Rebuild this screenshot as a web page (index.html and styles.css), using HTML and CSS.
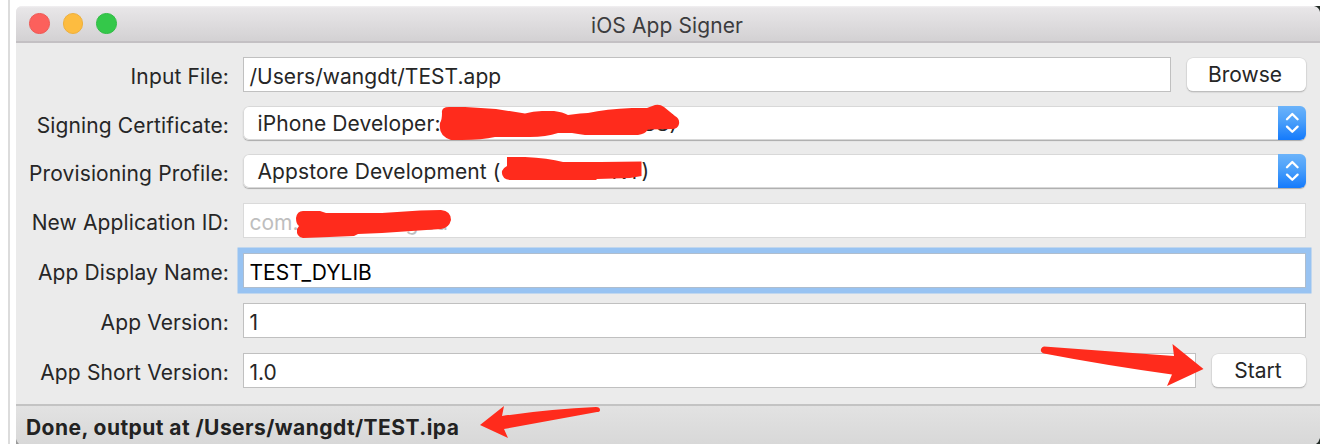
FILE: index.html
```html
<!DOCTYPE html>
<html lang="en">
<head>
<meta charset="utf-8">
<title>iOS App Signer</title>
<link rel="stylesheet" href="styles.css">
</head>
<body>
<div class="page">
  <div class="window">
    <header class="titlebar">
      <div class="lights"><i class="light close"></i><i class="light minimize"></i><i class="light expand"></i></div>
      <h1 class="title">iOS App Signer</h1>
    </header>
    <main class="form">
      <div class="row">
        <label class="label">Input File:</label>
        <div class="field path">/Users/wangdt/TEST.app</div>
        <button class="button browse">Browse</button>
      </div>
      <div class="row row-popup">
        <label class="label">Signing Certificate:</label>
        <div class="popup"><span class="value cert"><span>iPhone Developer:</span><span>SS)</span></span>
          <span class="stepper"><svg width="28" height="34" viewBox="0 0 28 34"><path d="M9 13.200 14.300 8 19.600 13.200M9 20.600 14.300 25.800 19.600 20.600"/></svg></span></div>
      </div>
      <div class="row row-popup">
        <label class="label">Provisioning Profile:</label>
        <div class="popup"><span class="value prof"><span>Appstore Development (</span><span>NY)</span></span>
          <span class="stepper"><svg width="28" height="34" viewBox="0 0 28 34"><path d="M9 13.200 14.300 8 19.600 13.200M9 20.600 14.300 25.800 19.600 20.600"/></svg></span></div>
      </div>
      <div class="row">
        <label class="label">New Application ID:</label>
        <div class="field placeholder"><span class="prefix">com.</span><span>g.su</span></div>
      </div>
      <div class="row">
        <label class="label">App Display Name:</label>
        <div class="field focused">TEST_DYLIB</div>
      </div>
      <div class="row">
        <label class="label">App Version:</label>
        <div class="field">1</div>
      </div>
      <div class="row">
        <label class="label">App Short Version:</label>
        <div class="field">1.0</div>
        <button class="button start">Start</button>
      </div>
    </main>
    <footer class="status">Done, output at /Users/wangdt/TEST.ipa</footer>
  </div>
  <svg class="marks" width="1324" height="444" viewBox="0 0 1324 444">
    <path fill="#9a9a9a" d="M16 439v5h3q-2-2-3-5z"/>
    <path fill="#222b26" d="M1314 6h6v6q-1-5-6-6zM1320 438v6h-4q3-2 4-6z"/>
    <g fill="#ff2b1c">
      <path d="M442 113Q441 107 449 107L465 107Q481 108 496 109L525 113.500Q533 111 542 111L554 111Q563 112 568 115L580 113.500L588 113Q606 109 632 108L647 108L655 105Q660 104 664 107L675 116Q680 119 679 124Q678 129 672 129L648 129.500Q645 134 638 135L585 135Q578 134 572 133L558 133Q546 137 530 137L495 137Q482 140 462 140L451 140Q438 136 440 123Q442 120 442 113Z"/>
      <path d="M507 157L525 157Q548 158 563 162L601 162L641.500 161.500L641.500 176L630 178L597 179L596 180L510 180Q501 179 502 171Q503 168 507 166Z"/>
      <path d="M303 211L320 211L326 213L382 213L420 210.500L441 210Q451 211 451 220Q449 228 441 229L382 233L358 234L354 236L317 237.500L303 238Q296 237 297 229L299 226Q296 224 296 218Q297 211 303 211Z"/>
      <path d="M1044 346.500L1105 351L1174 356L1172.500 344L1203.500 369L1167 386L1172 374.500Q1104 365 1044 353.500Q1040 352 1041 349Q1042 346.500 1044 346.500Z"/>
      <path d="M480 425L504 406L502 416Q550 409 596 407Q600 407 600 410Q600 412 597 412L504 429L508 438Z"/>
    </g>
  </svg>
</div>
</body>
</html>
```
FILE: styles.css
```css
* { box-sizing: border-box; }
body { margin: 0; background: #fff; font: 21px/24px Inter, "Liberation Sans", sans-serif; color: #262626; overflow: hidden; }
.page { position: relative; width: 1316px; height: 444px; padding: 6px 4px 0 6px; margin-left: 8px; border-left: 2px solid #dcdcdc; }
.window { height: 438px; display: flex; flex-direction: column; background: #ebebeb; border-radius: 6px 6px 0 0; }
.titlebar { height: 37px; border-bottom: 2px solid #c3c0c3; border-radius: 6px 0 0 0; background: linear-gradient(#f2f0f2 0, #e8e6e8 2px, #d3d1d3 100%); display: grid; grid-template-columns: 200px 1fr 200px; align-items: center; }
.lights { display: flex; gap: 13px; padding-left: 13px; }
.light { width: 20.500px; height: 20.500px; border-radius: 50%; border: 1px solid; }
.close { background: #fc605c; border-color: #ee5854; }
.minimize { background: #fdbc40; border-color: #edb03e; }
.expand { background: #34c84a; border-color: #30bc45; }
.title { margin: 4px 2px 0 0; font: inherit; letter-spacing: 0.1px; text-align: center; color: #3c3c3e; }
.form { padding: 14px 14px 0 0; height: 361px; display: flex; flex-direction: column; gap: 15px; }
.row { display: flex; height: 35px; align-items: flex-start; }
.row-popup { height: 34px; margin-top: -1px; }
.label { width: 213px; margin-right: 14px; padding-top: 8px; text-align: right; white-space: nowrap; flex: none; letter-spacing: 0.13px; }
.field { flex: 1; height: 35px; background: #fff; border: 1px solid #c0c0c0; padding: 7px 0 0 5.500px; white-space: nowrap; display: flex; }
.path { letter-spacing: 0.03px; }
.placeholder { border-color: #dadada; color: #bebebe; }
.prefix { width: 156px; }
.focused { color: #000; border-color: #aebdce; box-shadow: 0 0 0 5.500px #98c3f2; }
.popup { flex: 1; height: 34px; background: #fff; border-radius: 6px; box-shadow: inset 0 0 0 1px #d8d8d8, 0 1px 1px #aaa; display: flex; justify-content: space-between; }
.value { padding: 6px 0 0 14.500px; display: flex; white-space: nowrap; }
.value > :first-child { letter-spacing: 0.1px; }
.cert > :first-child { width: 385px; }
.prof > :first-child { width: 354px; }
.stepper { width: 28px; height: 34px; border-radius: 0 6px 6px 0; background: linear-gradient(#6bb3fa, #4a9ffa 45%, #147afc); }
.stepper svg { display: block; }
.stepper path { fill: none; stroke: #fff; stroke-width: 2.300; stroke-linecap: round; stroke-linejoin: round; }
.button { border: 0; padding: 0; margin-top: 1px; height: 33px; border-radius: 6px; background: #fff; font: inherit; color: #262626; box-shadow: 0 0 0 0.500px #d4d4d4, 0 1px 1.500px #999; flex: none; }
.browse { width: 119px; margin: 1px 0 0 16px; padding-right: 3px; }
.start { width: 94px; margin: 1px 0 0 16px; padding-right: 2px; }
.status { height: 40px; border-top: 2px solid #c3c3c3; background: linear-gradient(#e2e2e2, #d8d8d8); padding: 10px 0 0 10px; font-weight: 700; letter-spacing: 0.44px; color: #222; white-space: nowrap; }
.marks { position: absolute; left: -10px; top: 0; }
```
